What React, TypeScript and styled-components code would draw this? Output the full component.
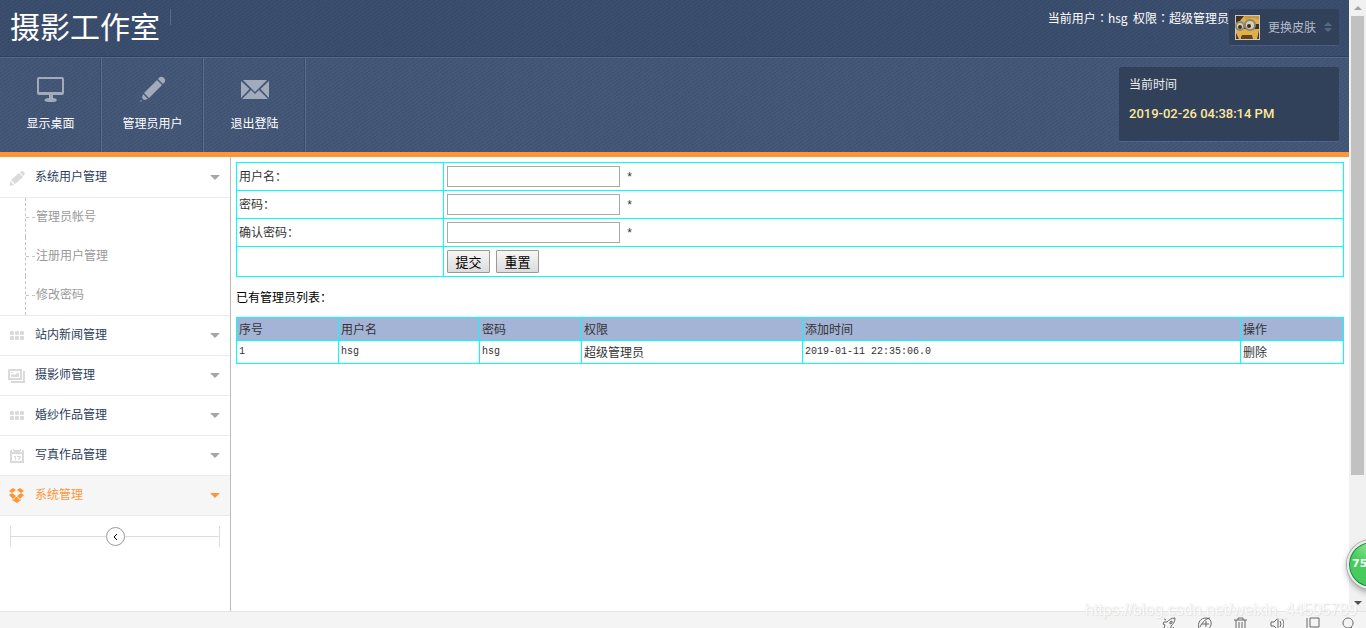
import React from "react";
import styled, { createGlobalStyle, css } from "styled-components";

const ui = '"Noto Sans CJK SC", sans-serif';
const cyan = "#00ffff";

const GlobalStyle = createGlobalStyle`
  * { box-sizing: border-box; }
  body { margin: 0; background: #fff; overflow: hidden; font: 12px/18px ${ui}; color: #333; }
  a { color: inherit; text-decoration: none; }
  ul { list-style: none; margin: 0; padding: 0; }
`;

const Shell = styled.div`
  position: relative;
  display: flex;
  flex-direction: column;
  height: 100vh;
  overflow: hidden;
`;
const Viewport = styled.div`
  flex: 1;
  min-height: 0;
  display: flex;
`;
const Page = styled.div`
  flex: 1;
  min-width: 0;
  display: flex;
  flex-direction: column;
`;

const twill = css`
  background-image: repeating-linear-gradient(145deg, rgba(10, 25, 60, 0.1) 0 1px, transparent 1px 3px);
`;
const Header = styled.header`
  display: flex;
  justify-content: space-between;
  align-items: flex-start;
  height: 57px;
  padding: 0 10px;
  color: #fff;
  background-color: #3c4e6d;
  border-bottom: 1px solid #2f415f;
  ${twill}
`;
const Brand = styled.div`
  display: flex;
  align-items: flex-start;
  gap: 10px;
`;
const Title = styled.h1`
  margin: 0;
  padding-top: 7px;
  font-size: 30px;
  font-weight: 400;
  line-height: 36px;
`;
const BrandRule = styled.span`
  width: 1px;
  height: 16px;
  margin-top: 9px;
  background: #5a6a86;
`;
const Account = styled.div`
  display: flex;
  align-items: flex-start;
  padding-top: 9px;
`;
const AccountText = styled.span`
  white-space: pre;
  line-height: 18px;
`;
const MidColon = styled.span`
  font-family: "Noto Sans CJK TC", sans-serif;
`;
const SkinButton = styled.button`
  display: flex;
  align-items: center;
  width: 110px;
  height: 37px;
  padding: 0 6px;
  border: 0;
  border-bottom: 1px solid #4a5c7c;
  border-radius: 2px;
  background: #32415a;
  color: #b4bccb;
  font: 12px/18px ${ui};
  span { margin: 0 8px; }
`;

const Toolbar = styled.div`
  display: flex;
  justify-content: space-between;
  height: 100px;
  padding-right: 10px;
  color: #fff;
  background-color: #465878;
  border-top: 1px solid #56698a;
  border-bottom: 5px solid #ff9535;
  ${twill}
`;
const Shortcuts = styled.nav`
  display: flex;
`;
const Shortcut = styled.a`
  display: flex;
  flex-direction: column;
  align-items: center;
  gap: 10px;
  width: 102px;
  padding-top: 16px;
  border-right: 1px solid #5c6e8e;
  box-shadow: inset -1px 0 #3a4b69;
  svg { color: #a2abbb; }
`;
const Clock = styled.div`
  width: 220px;
  height: 75px;
  margin-top: 9px;
  padding: 8px 10px;
  border-radius: 2px;
  border-bottom: 1px solid #52648a;
  background: #32415a;
  color: #eee;
`;
const Time = styled.div`
  margin-top: 11px;
  font: 500 13px/20px Roboto, sans-serif;
  color: #ffe79e;
`;

const Body = styled.div`
  flex: 1;
  display: flex;
  min-height: 0;
`;
const Sidebar = styled.aside`
  width: 231px;
  border-right: 1px solid #bbb;
  flex: none;
`;
const MenuLink = styled.a<{ $active?: boolean }>`
  display: flex;
  align-items: center;
  height: 40px;
  padding: 0 10px 0 8px;
  border-bottom: 1px solid #ebebeb;
  color: ${(p) => (p.$active ? "#ff9535" : "#2b3d5b")};
  background: ${(p) => (p.$active ? "#f6f6f6" : "#fff")};
`;
const MenuLabel = styled.span`
  padding-bottom: 3px;
`;
const MenuIcon = styled.span<{ $active?: boolean }>`
  display: flex;
  justify-content: center;
  width: 17px;
  margin-right: 10px;
  color: ${(p) => (p.$active ? "#ff9535" : "#dadada")};
`;
const Caret = styled.span<{ $active?: boolean }>`
  margin-left: auto;
  border: 5px solid transparent;
  border-top-color: ${(p) => (p.$active ? "#ff9535" : "#a6a6a6")};
  border-bottom: 0;
`;
const SubMenu = styled.ul`
  padding-left: 25px;
  border-bottom: 1px solid #ebebeb;
`;
const SubItem = styled.li`
  display: flex;
  align-items: center;
  height: 39px;
  border-left: 1px dashed #c4c4c4;
  color: #999;
  a { padding: 0 0 3px 1px; }
  &::before {
    content: "";
    width: 9px;
    border-top: 1px dashed #c4c4c4;
  }
`;
const MenuItem = styled.li<{ $open?: boolean }>`
  ${(p) => p.$open && "padding-top: 1px;"}
`;
const Collapser = styled.div`
  display: flex;
  align-items: center;
  height: 21px;
  margin: 10px 10px 0;
  border: solid #ddd;
  border-width: 0 1px;
  &::before, &::after {
    content: "";
    flex: 1;
    border-top: 1px solid #ddd;
  }
`;
const CollapseButton = styled.button`
  display: grid;
  place-items: center;
  width: 19px;
  height: 19px;
  padding: 0;
  border: 1px solid #999;
  border-radius: 50%;
  background: #fff;
  color: #000;
`;

const Content = styled.main`
  flex: 1;
  min-width: 0;
  padding: 5px 5px 0;
`;
const Table = styled.table`
  width: 100%;
  border-spacing: 0;
  border: solid ${cyan};
  border-width: 1px 0 0 1px;
  table-layout: fixed;
`;
const Cell = styled.td`
  padding: 1px 2px 3px;
  border: solid ${cyan};
  border-width: 0 1px 1px 0;
`;
const FieldCell = styled(Cell)`
  padding: 3px;
  > div {
    display: flex;
    align-items: center;
    gap: 6px;
  }
`;
const ListCell = styled(Cell)`
  height: 23px;
  padding: 0 2px;
`;
const HeadCell = styled(ListCell).attrs({ as: "th" })`
  text-align: left;
  font-weight: 400;
  background: #a3b4d7;
`;
const Latin = styled.span`
  display: block;
  font: 10px/18px "Liberation Mono", monospace;
`;
const Required = styled(Latin)`
  padding-top: 3px;
  font-size: 12px;
`;
const TextInput = styled.input`
  width: 173px;
  height: 21px;
  padding: 1px;
  border: 1px solid #a9a9a9;
`;
const FormButton = styled.button`
  width: 43px;
  height: 23px;
  padding: 0;
  border: 1px solid #999;
  border-radius: 1px;
  background: linear-gradient(#f6f6f6, #dcdcdc);
  color: #000;
  font: 13px/19px ${ui};
`;
const ListTitle = styled.p`
  margin: 11px 0;
  color: #000;
`;

const ScrollTrack = styled.div`
  display: flex;
  flex-direction: column;
  align-items: center;
  justify-content: space-between;
  width: 17px;
  padding: 6px 0;
  background: #f1f1f1;
`;
const ScrollThumb = styled.div`
  width: 13px;
  flex: 0 1 459px;
  margin: 6px 0 auto;
  background: #c1c1c1;
`;
const ScrollArrow = styled.span<{ $down?: boolean }>`
  border: 4px solid transparent;
  ${(p) =>
    p.$down
      ? "border-top-color: #505050; border-bottom: 0;"
      : "border-bottom-color: #a3a3a3; border-top: 0;"}
`;
const StatusBar = styled.footer`
  display: flex;
  justify-content: flex-end;
  align-items: flex-start;
  gap: 22px;
  height: 17px;
  padding: 5px 10px 0;
  overflow: hidden;
  background: #f4f4f4;
  border-top: 1px solid #e5e5e5;
  color: #666;
  svg { flex: none; }
`;
const Watermark = styled.div`
  position: absolute;
  right: 9px;
  bottom: 8px;
  font: 16px/20px "Liberation Sans", sans-serif;
  color: rgba(255, 255, 255, 0.9);
  text-shadow: 0 0 1px #ddd, 1px 1px 1px #e2e2e2;
`;
const Booster = styled.div`
  position: absolute;
  right: -30px;
  bottom: 39px;
  width: 49px;
  height: 49px;
  padding-left: 3px;
  border: 2px solid #e9e9e9;
  border-radius: 50%;
  background: radial-gradient(circle at 50% 0, #9be89b 0, #45cc5c 45%, #45cc5c 100%);
  box-shadow: 0 0 0 1px #aaa, 0 3px 6px rgba(0, 0, 0, 0.35), inset 0 0 0 1px #168653;
  color: #fff;
  font: bold 11px/44px "DejaVu Sans", sans-serif;
`;

const Icon = ({ w, h, children }: { w: number; h: number; children: React.ReactNode }) => (
  <svg width={w} height={h} viewBox={`0 0 ${w} ${h}`} fill="currentColor" aria-hidden="true">{children}</svg>
);
const Monitor = () => (
  <Icon w={28} h={30}>
    <path fillRule="evenodd" d="M2 3h23q2 0 2 2v14q0 2-2 2H16v3c5 0 5 4 0 4h-4c-6 0-6-4 0-4v-3H2q-2 0-2-2V5q0-2 2-2zm0 2v13h23V5z" />
  </Icon>
);
const BigPencil = () => (
  <Icon w={28} h={30}>
    <path d="M18 6l5 5L10 24l-5-5zM19 5q3-4 6-1t-1 6zM4 20l5 5-4 1-2-2zM2 26l1 1-2 1z" />
  </Icon>
);
const Mail = () => (
  <Icon w={28} h={30}>
    <path d="M2 6h24L14 18zM0 7l8.500 8L0 24zM28 7v17l-8.500-9zM1 25l9-9 4 4 4-4 9 9z" />
  </Icon>
);
const SmallPencil = () => (
  <Icon w={16} h={16}>
    <path d="M10 3l4 4-8 7-4-4zM11 2q2-2 4 0t-1 4zM1 11l4 4-4 1z" />
  </Icon>
);
const Grid = () => (
  <Icon w={14} h={9}>
    {[0, 5, 10].map((x) => [0, 5].map((y) => <rect key={`${x}-${y}`} x={x} y={y} width="4" height="4" rx="1" />))}
  </Icon>
);
const Pictures = () => (
  <Icon w={17} h={14}>
    <path fillRule="evenodd" d="M1 0h13v11H0V1zM2 2v7h10V2zM15 2h2v12H3v-2h12zM3 8V6l2-1 2 1 3-3 1 2v3zM3 3h2v1H3z" />
  </Icon>
);
const Calendar = () => (
  <Icon w={14} h={14}>
    <path fillRule="evenodd" d="M0 1h2v2h2V1h6v2h2V1h2v13H0zM2 5v7h10V5zM3 0h1v2H3zM10 0h1v2h-1zM4 7h2v4H5V8H4zM7 7h4v1L9 11H8l1-3H7z" />
  </Icon>
);
const Dropbox = () => (
  <Icon w={15} h={15}>
    <path d="M4 0l3 2-4 3-3-2zM11 0l4 3-3 2-4-3zM0 7l3-2 4 3-3 3zM15 7l-3-2-4 3 3 3zM3 11l1 1 3-3 1 0 3 3 1-1v1l-4 3-5-3z" />
  </Icon>
);
const Avatar = () => (
  <svg width="25" height="25" viewBox="0 0 25 25" aria-hidden="true">
    <rect width="25" height="25" fill="#c7cad0" />
    <rect x="1" y="1" width="23" height="23" fill="#dfb04c" />
    <path d="M1 1h8L4 7v5H1z" fill="#3f3220" />
    <path d="M9 1h15v4q-7-4-13 0z" fill="#c99a3b" />
    <path d="M1 9h23v5H1z" fill="#3a3224" />
    <circle cx="5" cy="11" r="5" fill="#918a78" />
    <circle cx="5" cy="11" r="3" fill="#d8cfb5" />
    <circle cx="5" cy="12" r="2" fill="#453725" />
    <circle cx="15" cy="10" r="6" fill="#8d8778" />
    <circle cx="15" cy="10" r="4" fill="#d8cfb5" />
    <circle cx="14" cy="11" r="2" fill="#3b2c1c" />
    <path d="M6 22l1-2h10l1 4H6z" fill="#6b4515" />
    <path d="M1 18l3 6H1zM24 15v9h-2z" fill="#533b18" />
  </svg>
);
const statusIcons = [
  "M13 1C9 1 7 3 5 5L2 5 1 7l2 1-1 3 1 1 3-1 1 2 2-1V9c2-2 4-4 4-8zM8 5l2-1 0 2-2 1zM3 12l-2 2M2 2l2 1M11 10l1 2",
  "M1 12C-1 5 3 1 8 1c6 0 7 8 2 11M2 10C4 5 9 1 12 1M4 7h7M8 4v6",
  "M0 3h13M4 3V1h5v2M2 3v10h9V3M5 5v6M8 5v6",
  "M1 5v4h3l4 4V1L4 5zM10 4q2 3 0 6M12 2q4 5 0 10",
  "M4 1h9v9H4zM1 1v11h7",
  "M6 1a5 5 0 1 0 .1 0M9 10l4 4",
];

const menu = [
  { label: "系统用户管理", icon: <SmallPencil />, children: ["管理员帐号", "注册用户管理", "修改密码"] },
  { label: "站内新闻管理", icon: <Grid /> },
  { label: "摄影师管理", icon: <Pictures /> },
  { label: "婚纱作品管理", icon: <Grid /> },
  { label: "写真作品管理", icon: <Calendar /> },
  { label: "系统管理", icon: <Dropbox />, active: true },
];
const fields = [
  { id: "username", label: "用户名：", type: "text" },
  { id: "password", label: "密码：", type: "password" },
  { id: "confirm", label: "确认密码：", type: "password" },
];

export default function App() {
  return (
    <Shell>
      <GlobalStyle />
      <Viewport>
        <Page>
          <Header>
            <Brand><Title>摄影工作室</Title><BrandRule /></Brand>
            <Account>
              <AccountText>当前用户<MidColon>：</MidColon>hsg{"  "}权限<MidColon>：</MidColon>超级管理员</AccountText>
              <SkinButton type="button">
                <Avatar /><span>更换皮肤</span>
                <svg width="8" height="10" viewBox="0 0 8 10" fill="#566987" aria-hidden="true"><path d="M0 4l4-4 4 4zM0 6h8l-4 4z" /></svg>
              </SkinButton>
            </Account>
          </Header>
          <Toolbar>
            <Shortcuts>
              <Shortcut href="#desktop"><Monitor />显示桌面</Shortcut>
              <Shortcut href="#admins"><BigPencil />管理员用户</Shortcut>
              <Shortcut href="#logout"><Mail />退出登陆</Shortcut>
            </Shortcuts>
            <Clock>当前时间<Time>2019-02-26 04:38:14 PM</Time></Clock>
          </Toolbar>
          <Body>
            <Sidebar>
              <ul>
                {menu.map((m) => (
                  <MenuItem key={m.label} $open={!!m.children}>
                    <MenuLink href="#menu" $active={m.active}>
                      <MenuIcon $active={m.active}>{m.icon}</MenuIcon>
                      <MenuLabel>{m.label}</MenuLabel>
                      <Caret $active={m.active} />
                    </MenuLink>
                    {m.children && (
                      <SubMenu>{m.children.map((c) => <SubItem key={c}><a href="#page">{c}</a></SubItem>)}</SubMenu>
                    )}
                  </MenuItem>
                ))}
              </ul>
              <Collapser>
                <CollapseButton type="button" aria-label="收起">
                  <svg width="5" height="8" viewBox="0 0 5 8" fill="none" stroke="currentColor" aria-hidden="true"><path d="M4 1L1 4l3 3" /></svg>
                </CollapseButton>
              </Collapser>
            </Sidebar>
            <Content>
              <form>
                <Table>
                  <colgroup><col width="207" /><col /></colgroup>
                  <tbody>
                    {fields.map((f) => (
                      <tr key={f.id}>
                        <Cell><label htmlFor={f.id}>{f.label}</label></Cell>
                        <FieldCell><div><TextInput id={f.id} type={f.type} /><Required>*</Required></div></FieldCell>
                      </tr>
                    ))}
                    <tr>
                      <Cell />
                      <FieldCell><div><FormButton type="button">提交</FormButton><FormButton type="reset">重置</FormButton></div></FieldCell>
                    </tr>
                  </tbody>
                </Table>
              </form>
              <ListTitle>已有管理员列表：</ListTitle>
              <Table>
                <colgroup>
                  <col width="102" /><col width="141" /><col width="102" /><col width="221" /><col /><col width="103" />
                </colgroup>
                <thead>
                  <tr>{["序号", "用户名", "密码", "权限", "添加时间", "操作"].map((h) => <HeadCell key={h}>{h}</HeadCell>)}</tr>
                </thead>
                <tbody>
                  <tr>
                    <ListCell><Latin>1</Latin></ListCell>
                    <ListCell><Latin>hsg</Latin></ListCell>
                    <ListCell><Latin>hsg</Latin></ListCell>
                    <ListCell>超级管理员</ListCell>
                    <ListCell><Latin>2019-01-11 22:35:06.0</Latin></ListCell>
                    <ListCell><a href="#delete">删除</a></ListCell>
                  </tr>
                </tbody>
              </Table>
            </Content>
          </Body>
        </Page>
        <ScrollTrack><ScrollArrow /><ScrollThumb /><ScrollArrow $down /></ScrollTrack>
      </Viewport>
      <StatusBar>
        {statusIcons.map((d) => (
          <svg key={d} width="14" height="14" viewBox="0 0 14 14" fill="none" stroke="currentColor" aria-hidden="true"><path d={d} /></svg>
        ))}
      </StatusBar>
      <Watermark>https://blog.csdn.net/weixin_44505789</Watermark>
      <Booster>75</Booster>
    </Shell>
  );
}
